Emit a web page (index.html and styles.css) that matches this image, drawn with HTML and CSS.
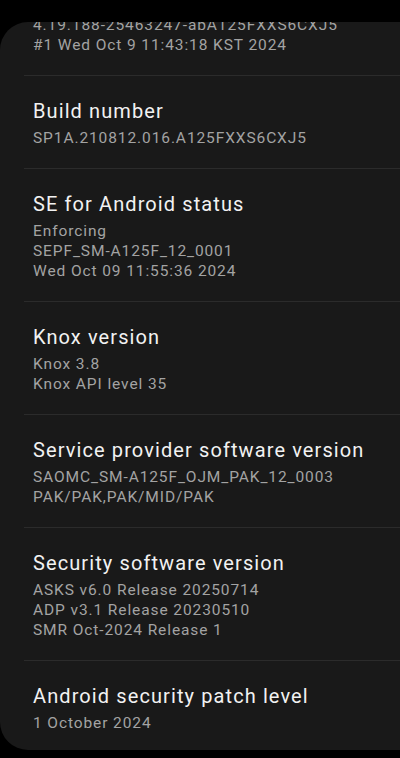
FILE: index.html
```html
<!DOCTYPE html>
<html lang="en">
<head>
<meta charset="utf-8">
<title>Software information</title>
<link rel="stylesheet" href="styles.css">
</head>
<body>
  <main class="card">
    <ul class="list">
      <li class="item">
        <div class="title">Kernel version</div>
        <div class="sub">4.19.188-25463247-abA125FXXS6CXJ5</div>
        <div class="sub">#1 Wed Oct 9 11:43:18 KST 2024</div>
      </li>
      <li class="item">
        <div class="title">Build number</div>
        <div class="sub">SP1A.210812.016.A125FXXS6CXJ5</div>
      </li>
      <li class="item">
        <div class="title">SE for Android status</div>
        <div class="sub">Enforcing</div>
        <div class="sub">SEPF_SM-A125F_12_0001</div>
        <div class="sub">Wed Oct 09 11:55:36 2024</div>
      </li>
      <li class="item">
        <div class="title">Knox version</div>
        <div class="sub">Knox 3.8</div>
        <div class="sub">Knox API level 35</div>
      </li>
      <li class="item">
        <div class="title">Service provider software version</div>
        <div class="sub">SAOMC_SM-A125F_OJM_PAK_12_0003</div>
        <div class="sub">PAK/PAK,PAK/MID/PAK</div>
      </li>
      <li class="item">
        <div class="title">Security software version</div>
        <div class="sub">ASKS v6.0 Release 20250714</div>
        <div class="sub">ADP v3.1 Release 20230510</div>
        <div class="sub">SMR Oct-2024 Release 1</div>
      </li>
      <li class="item">
        <div class="title">Android security patch level</div>
        <div class="sub">1 October 2024</div>
      </li>
    </ul>
  </main>
</body>
</html>
```

FILE: styles.css
```css
html, body {
  margin: 0;
  padding: 0;
  height: 758px;
  overflow: hidden;
  background: #000;
}

body {
  font-family: Roboto, "Noto Sans", sans-serif;
  -webkit-font-smoothing: antialiased;
}

.card {
  margin-top: 22px;
  height: 728px;
  background: #191919;
  border-radius: 28px 0 0 28px;
  overflow: hidden;
}

.list {
  list-style: none;
  margin: -59px 0 0 0;
  padding: 0;
}

.item {
  margin-left: 24px;
  padding: 20px 0 20px 9px;
}

.item:not(:last-child) {
  border-bottom: 1px solid #2b2b2b;
}

.title {
  font-size: 20px;
  line-height: 30px;
  letter-spacing: 1.1px;
  color: #f2f2f2;
  margin-bottom: 2px;
  white-space: nowrap;
}

.sub {
  font-size: 15.5px;
  line-height: 20px;
  letter-spacing: 0.9px;
  color: #a3a3a3;
  white-space: nowrap;
}
```
